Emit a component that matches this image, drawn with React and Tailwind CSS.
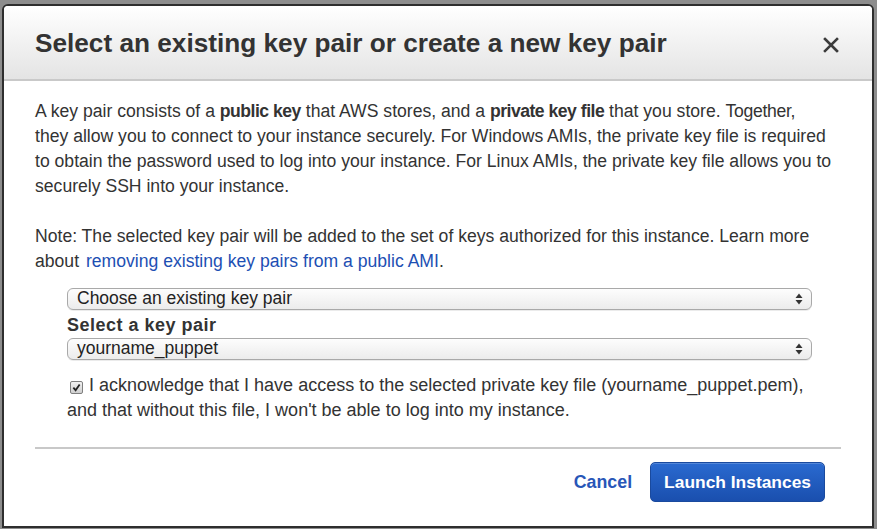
import React from 'react';

const Updown = () => (
  <svg width="8" height="12" viewBox="0 0 8 12" className="text-[#333]">
    <path d="M4 0.5 L7.5 5 L0.5 5 Z" fill="currentColor" />
    <path d="M4 11.5 L7.5 7 L0.5 7 Z" fill="currentColor" />
  </svg>
);

const FakeSelect = ({ value }) => (
  <div className="flex items-center justify-between h-[22px] ml-[63px] mr-[60px] pl-[9px] pr-[8px] rounded-[6px] border border-[#a9a9a9] bg-gradient-to-b from-[#fdfdfd] to-[#ececec] shadow-[0_1px_0_rgba(0,0,0,0.08)] text-[17.5px] leading-none text-[#222]">
    <span>{value}</span>
    <Updown />
  </div>
);

export default function App() {
  return (
    <div
      className="w-[877px] h-[529px] bg-[#8d8d8d] pt-[4px] pl-[2px] overflow-hidden"
      style={{ fontFamily: '"Liberation Sans", Arial, Helvetica, sans-serif' }}
    >
      <div className="w-[872px] h-[524px] bg-white border-2 border-[#2e2e2e] rounded-t-[6px] flex flex-col overflow-hidden">
        {/* Header */}
        <div className="h-[75px] shrink-0 flex items-center justify-between pl-[31px] pr-[33px] bg-gradient-to-b from-[#ffffff] to-[#e4e4e4] border-b-2 border-[#c9c9c9]">
          <h1 className="text-[26.2px] font-bold text-[#333] pt-[2px]">
            Select an existing key pair or create a new key pair
          </h1>
          <svg width="16" height="16" viewBox="0 0 16 16" className="mt-[4px]">
            <path d="M2 2 L14 14 M14 2 L2 14" stroke="#3c3c3c" strokeWidth="2.6" strokeLinecap="square" />
          </svg>
        </div>

        {/* Body */}
        <div className="flex-1 flex flex-col pt-[18px] text-[18px] leading-[25px] text-[#333] whitespace-nowrap">
          <p className="px-[31px] text-[17.6px]">
            A key pair consists of a <b className="tracking-[-0.5px]">public key</b> that AWS stores, and a{' '}
            <b className="tracking-[-0.5px]">private key file</b> that you store. <span className="tracking-[-0.3px]">Together,</span>
            <br />
            they allow you to connect to your instance securely. For Windows AMIs, the private key file is required
            <br />
            to obtain the password used to log into your instance. For Linux AMIs, the private key file allows you to
            <br />
            securely SSH into your instance.
          </p>
          <p className="px-[31px] mt-[25px] text-[17.6px]">
            Note: The selected key pair will be added to the set of keys authorized for this instance. Learn more
            <br />
            about <span className="text-[#1d4fb3] ml-[2px]">removing existing key pairs from a public AMI</span>.
          </p>

          <div className="mt-[14px]">
            <FakeSelect value="Choose an existing key pair" />
          </div>
          <div className="ml-[63px] mt-[4px] font-bold text-[18px] tracking-[0.5px] leading-[22px] text-[#333]">Select a key pair</div>
          <div className="mt-[2px]">
            <FakeSelect value="yourname_puppet" />
          </div>

          <div className="ml-[63px] mt-[13px]">
            <span className="inline-flex items-center justify-center w-[13px] h-[13px] ml-[3px] mr-[6px] align-[-1px] rounded-[2px] border border-[#7f7f7f] bg-gradient-to-b from-[#f2f2f2] to-[#cfcfcf]">
              <svg width="9" height="9" viewBox="0 0 8 8">
                <path d="M1.2 4.2 L3.2 6.4 L6.8 1.4" fill="none" stroke="#222" strokeWidth="1.6" />
              </svg>
            </span>
            I acknowledge that I have access to the selected private key file (yourname_puppet.pem),
            <br />
            and that without this file, I won't be able to log into my instance.
          </div>

          <div className="mx-[31px] mt-[24px] h-[2px] bg-[#c8c8c8]" />

          <div className="flex items-center justify-end gap-[18px] pr-[47px] mt-[13px]">
            <span className="text-[#2856b8] font-bold text-[17.8px]">Cancel</span>
            <div className="h-[40px] px-[13px] flex items-center rounded-[5px] bg-gradient-to-b from-[#2a6ad0] to-[#1a4fae] border border-[#1a4a9e] text-white font-bold text-[17.4px] shadow-[inset_0_1px_0_rgba(255,255,255,0.2)]">
              Launch Instances
            </div>
          </div>
        </div>
      </div>
    </div>
  );
}
